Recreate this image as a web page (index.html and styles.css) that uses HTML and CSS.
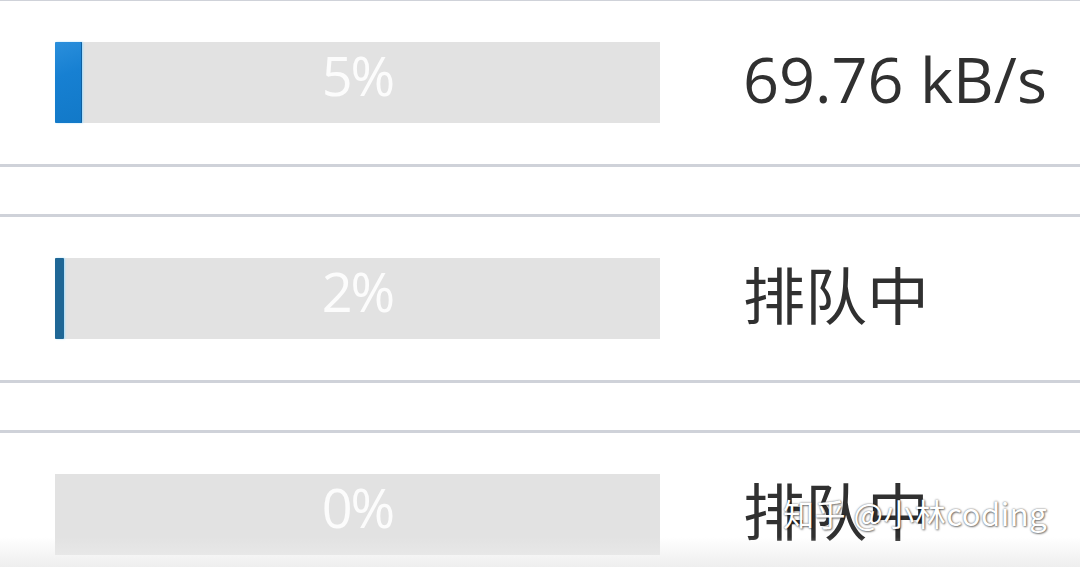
FILE: index.html
```html
<!DOCTYPE html>
<html lang="zh-CN">
<head>
<meta charset="utf-8">
<link rel="stylesheet" href="styles.css">
</head>
<body>
<div class="list">
  <div class="row">
    <div class="bar">
      <div class="fill fill-active" style="width: 27px"></div>
      <span class="pct">5%</span>
    </div>
    <div class="status">69.76 kB/s</div>
  </div>
  <div class="row">
    <div class="bar">
      <div class="fill fill-queued" style="width: 9px"></div>
      <span class="pct">2%</span>
    </div>
    <div class="status cjk">排队中</div>
  </div>
  <div class="row row-last">
    <div class="bar">
      <span class="pct">0%</span>
    </div>
    <div class="status cjk">排队中</div>
  </div>
</div>
<div class="shade"></div>
<div class="watermark">知乎 @小林coding</div>
</body>
</html>
```

FILE: styles.css
```css
html, body {
  margin: 0;
  padding: 0;
  background: #ffffff;
  width: 1080px;
  height: 567px;
  overflow: hidden;
}

body {
  position: relative;
  font-family: "Open Sans", "Noto Sans", "Noto Sans CJK SC", sans-serif;
}

.list {
  display: flex;
  flex-direction: column;
  gap: 47px;
  margin-top: -2px;
}

.row {
  display: flex;
  align-items: center;
  border-top: 3px solid #cfd2d9;
  border-bottom: 3px solid #cfd2d9;
  padding: 41px 0 41px 55px;
}

.bar {
  position: relative;
  box-sizing: border-box;
  width: 605px;
  height: 81px;
  padding-bottom: 16px;
  background: #e2e2e2;
  display: flex;
  align-items: center;
  justify-content: center;
  flex-shrink: 0;
}

.fill {
  position: absolute;
  left: 0;
  top: 0;
  bottom: 0;
  border-radius: 1px;
}

.fill-active {
  background: linear-gradient(160deg, #2a8fdc 0%, #1780d2 40%, #1279c8 100%);
  box-shadow: 1px 0 2px #9fdcff, inset -1px 0 0 #0f5f9f;
}

.fill-queued {
  background: #1f6796;
  box-shadow: 1px 0 2px #a8e0ff;
}

.pct {
  position: relative;
  color: #fcfcfc;
  font-size: 54px;
  line-height: 1;
  letter-spacing: -2px;
}

.status {
  margin-left: 83px;
  padding-bottom: 8px;
  color: #303030;
  font-size: 63px;
  line-height: 1;
  white-space: nowrap;
}

.cjk {
  font-family: "Noto Sans CJK SC", "Noto Sans", sans-serif;
  font-size: 62px;
  padding-bottom: 12px;
}

.shade {
  position: absolute;
  left: 0;
  right: 0;
  bottom: 0;
  height: 30px;
  background: linear-gradient(to bottom, rgba(240,240,240,0) 0%, rgba(236,236,236,0.9) 100%);
}

.watermark {
  position: absolute;
  left: 783px;
  top: 494px;
  color: #ffffff;
  font-family: "Noto Sans CJK SC", "Noto Sans", sans-serif;
  font-size: 31px;
  line-height: 1.2;
  letter-spacing: 0.5px;
  text-shadow: 0 0 2px rgba(0,0,0,0.6), 1px 1px 2px rgba(0,0,0,0.45);
}
```
